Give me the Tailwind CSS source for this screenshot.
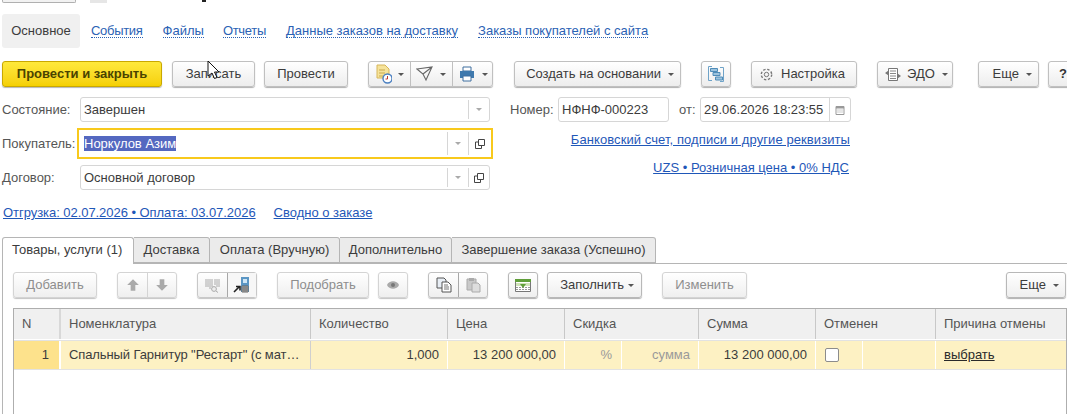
<!DOCTYPE html>
<html lang="ru">
<head>
<meta charset="UTF-8">
<title>Заказ покупателя</title>
<script src="https://cdn.jsdelivr.net/npm/@tailwindcss/browser@4"></script>
</head>
<body class="bg-white">
<div class="relative w-[1067px] h-[414px] overflow-hidden bg-white text-[13px] leading-[16px] text-[#3c3c3c] font-['Liberation_Sans',Arial,sans-serif]">

  <!-- cropped window header -->
  <div class="flex h-[3px] pl-[2px] overflow-hidden">
    <div class="w-[74px] h-[3px] border-b border-x border-[#b0b0b0] rounded-b-[2px] bg-[#f2f2f2]"></div>
    <div class="ml-[14px] w-[17px] h-[3px] bg-[#e6e6e6]"></div>
    <div class="ml-[95px] w-[4px] h-[2px] bg-[#222]"></div>
  </div>

  <!-- section tabs -->
  <div class="flex items-center h-[34px] mt-[11px] pl-[2px]">
    <div class="flex items-center justify-center w-[78px] h-[34px] rounded-[3px] bg-[#f0f0f0]">Основное</div>
    <a class="ml-[11px] text-[#2b62b4] border-b border-dotted border-[#2b62b4] leading-[13px] tracking-[-0.3px]">События</a>
    <a class="ml-[20px] text-[#2b62b4] border-b border-dotted border-[#2b62b4] leading-[13px]">Файлы</a>
    <a class="ml-[19px] text-[#2b62b4] border-b border-dotted border-[#2b62b4] leading-[13px] tracking-[-0.3px]">Отчеты</a>
    <a class="ml-[20px] text-[#2b62b4] border-b border-dotted border-[#2b62b4] leading-[13px]">Данные заказов на доставку</a>
    <a class="ml-[20px] text-[#2b62b4] border-b border-dotted border-[#2b62b4] leading-[13px]">Заказы покупателей с сайта</a>
  </div>

  <!-- command bar -->
  <div class="flex items-start h-[26px] mt-[13px] pl-[2px]">
    <button class="shrink-0 w-[160px] h-[26px] rounded-[3px] border border-[#c9a800] bg-linear-to-b from-[#ffe93a] to-[#f5d000] shadow-[0_1px_1px_#b5b5b5] font-bold text-[#4a4300]">Провести и закрыть</button>
    <button class="shrink-0 ml-[10px] w-[83px] h-[26px] rounded-[3px] border border-[#c0c0c0] bg-linear-to-b from-white to-[#ededed] shadow-[0_1px_1px_#b0b0b0]">Записать</button>
    <button class="shrink-0 ml-[9px] w-[84px] h-[26px] rounded-[3px] border border-[#c0c0c0] bg-linear-to-b from-white to-[#ededed] shadow-[0_1px_1px_#b0b0b0]">Провести</button>

    <div class="shrink-0 ml-[20px] flex w-[125px] h-[26px] rounded-[3px] border border-[#c0c0c0] bg-linear-to-b from-white to-[#ededed] shadow-[0_1px_1px_#b0b0b0]">
      <div class="flex items-center w-[42px] pl-[7px] border-r border-[#c0c0c0]">
        <svg width="16" height="20" viewBox="0 0 16 20"><path d="M1 1h8l4 4v9H1z" fill="#f6e39a" stroke="#d6b65a"/><path d="M3 6h6M3 9h6M3 12h4" stroke="#c9a94e"/><circle cx="11.5" cy="14.5" r="4.5" fill="#fff" stroke="#4a7fc0" stroke-width="1.4"/><path d="M11.5 12v3h-2" stroke="#c0392b" fill="none"/></svg>
        <span class="ml-[6px] w-0 h-0 border-x-[3.5px] border-x-transparent border-t-[3.5px] border-t-[#555]"></span>
      </div>
      <div class="flex items-center w-[42px] pl-[5px] border-r border-[#c0c0c0]">
        <svg width="18" height="16" viewBox="0 0 18 16"><path d="M1 3l15-2-6 13-3-6z M7 8l9-7" fill="none" stroke="#666" stroke-width="1.1"/></svg>
        <span class="ml-[6px] w-0 h-0 border-x-[3.5px] border-x-transparent border-t-[3.5px] border-t-[#555]"></span>
      </div>
      <div class="flex items-center pl-[6px]">
        <svg width="16" height="16" viewBox="0 0 16 16"><path d="M4 1h8v4H4z" fill="#fff" stroke="#3f6f9f"/><path d="M1 5h14v7H1z" fill="#3f79ad"/><path d="M4 10h8v5H4z" fill="#fff" stroke="#3f6f9f"/></svg>
        <span class="ml-[7px] w-0 h-0 border-x-[3.5px] border-x-transparent border-t-[3.5px] border-t-[#555]"></span>
      </div>
    </div>

    <button class="shrink-0 ml-[21px] flex items-center justify-end pr-[6px] w-[167px] h-[26px] rounded-[3px] border border-[#c0c0c0] bg-linear-to-b from-white to-[#ededed] shadow-[0_1px_1px_#b0b0b0]">Создать на основании<span class="ml-[7px] w-0 h-0 border-x-[3.5px] border-x-transparent border-t-[3.5px] border-t-[#555]"></span></button>

    <button class="shrink-0 ml-[20px] flex items-center justify-center w-[30px] h-[26px] rounded-[3px] border border-[#c0c0c0] bg-linear-to-b from-white to-[#ededed] shadow-[0_1px_1px_#b0b0b0]">
      <svg width="16" height="16" viewBox="0 0 16 16"><path d="M4 .5H.5v14H4M12 1.5h3.5V15.5H12" fill="none" stroke="#6fa3c8"/><path d="M2.5 2.5h7v3h-7zM5 6.5h7v3H5zM7.5 11h7v3h-7z" fill="#9cc3de" stroke="#4f8cb8"/></svg>
    </button>

    <button class="shrink-0 ml-[20px] flex items-center w-[106px] h-[26px] pl-[7px] rounded-[3px] border border-[#c0c0c0] bg-linear-to-b from-white to-[#ededed] shadow-[0_1px_1px_#b0b0b0]">
      <svg width="15" height="15" viewBox="0 0 15 15"><circle cx="7.5" cy="7.5" r="2.2" fill="none" stroke="#777"/><circle cx="7.5" cy="7.5" r="5.2" fill="none" stroke="#777" stroke-width="1.4" stroke-dasharray="2.4 1.7"/></svg>
      <span class="ml-[7px]">Настройка</span>
    </button>

    <button class="shrink-0 ml-[20px] flex items-center w-[76px] h-[26px] pl-[7px] rounded-[3px] border border-[#c0c0c0] bg-linear-to-b from-white to-[#ededed] shadow-[0_1px_1px_#b0b0b0]">
      <svg width="16" height="15" viewBox="0 0 16 15"><path d="M3.5 1.5h9v12h-9z" fill="#fff" stroke="#777"/><path d="M5 4h6M5 6.5h6M5 9h6M5 11.5h6" stroke="#888"/><path d="M0 6l3.5-2.5v5zM16 9l-3.5-2.5v5z" fill="#777"/></svg>
      <span class="ml-[6px]">ЭДО</span>
      <span class="ml-[7px] w-0 h-0 border-x-[3.5px] border-x-transparent border-t-[3.5px] border-t-[#555]"></span>
    </button>

    <button class="shrink-0 ml-[25px] flex items-center justify-end pr-[6px] w-[61px] h-[26px] rounded-[3px] border border-[#c0c0c0] bg-linear-to-b from-white to-[#ededed] shadow-[0_1px_1px_#b0b0b0]">Еще<span class="ml-[7px] w-0 h-0 border-x-[3.5px] border-x-transparent border-t-[3.5px] border-t-[#555]"></span></button>
    <button class="ml-[9px] shrink-0 w-[30px] h-[26px] pl-[10px] text-left rounded-[3px] border border-[#c0c0c0] bg-linear-to-b from-white to-[#ededed] shadow-[0_1px_1px_#b0b0b0] font-bold text-[#333]">?</button>
  </div>

  <!-- header form -->
  <div class="flex mt-[10px]">
    <div class="w-[493px] shrink-0">
      <div class="flex items-center h-[25px] pl-[2px]">
        <span class="w-[78px] text-[#555]">Состояние:</span>
        <div class="flex items-center w-[410px] h-[25px] rounded-[3px] border border-[#d6d6d6] pl-[3px]">
          <span class="flex-1">Завершен</span>
          <span class="flex items-center justify-center w-[21px] h-[19px] border-l border-[#d6d6d6]"><span class="w-0 h-0 border-x-[3.5px] border-x-transparent border-t-[3.5px] border-t-[#aaa]"></span></span>
        </div>
      </div>
      <div class="flex items-center h-[31px] mt-[6px] pl-[2px]">
        <span class="w-[75px] text-[#555]">Покупатель:</span>
        <div class="flex items-center w-[416px] h-[31px] border-[2px] border-[#f8c91c] pl-[5px]">
          <span class="flex-1"><span class="bg-[#5468c0] text-white">Норкулов Азим</span></span>
          <span class="flex items-center justify-center w-[21px] h-[23px] border-l border-[#d6d6d6]"><span class="w-0 h-0 border-x-[3.5px] border-x-transparent border-t-[3.5px] border-t-[#aaa]"></span></span>
          <span class="flex items-center justify-center w-[23px] h-[23px] border-l border-[#d6d6d6]">
            <svg width="10" height="10" viewBox="0 0 10 10"><path d="M3.5.5h6v6h-6zM3.5 3H.5v6.5h6V6.5" fill="none" stroke="#444"/></svg>
          </span>
        </div>
      </div>
      <div class="flex items-center h-[25px] mt-[6px] pl-[2px]">
        <span class="w-[78px] text-[#555]">Договор:</span>
        <div class="flex items-center w-[410px] h-[25px] rounded-[3px] border border-[#d6d6d6] pl-[3px]">
          <span class="flex-1">Основной договор</span>
          <span class="flex items-center justify-center w-[21px] h-[19px] border-l border-[#d6d6d6]"><span class="w-0 h-0 border-x-[3.5px] border-x-transparent border-t-[3.5px] border-t-[#aaa]"></span></span>
          <span class="flex items-center justify-center w-[21px] h-[19px] border-l border-[#d6d6d6]">
            <svg width="10" height="10" viewBox="0 0 10 10"><path d="M3.5.5h6v6h-6zM3.5 3H.5v6.5h6V6.5" fill="none" stroke="#444"/></svg>
          </span>
        </div>
      </div>
    </div>

    <div class="w-[358px] shrink-0">
      <div class="flex items-center h-[25px] pl-[17px]">
        <span class="w-[48px] text-[#555]">Номер:</span>
        <div class="flex items-center w-[111px] h-[25px] rounded-[3px] border border-[#d6d6d6] pl-[3px]">НФНФ-000223</div>
        <span class="ml-[10px] w-[21px] text-[#555]">от:</span>
        <div class="flex items-center w-[151px] h-[25px] rounded-[3px] border border-[#d6d6d6] pl-[3px]">
          <span class="flex-1">29.06.2026 18:23:55</span>
          <span class="flex items-center justify-center w-[21px] h-[23px] border-l border-[#d6d6d6]">
            <svg width="10" height="10" viewBox="0 0 10 10"><path d="M1 1.5h8v8H1z" fill="#fff" stroke="#999"/><path d="M1 1h8v2.5H1z" fill="#999"/><path d="M2.5 5h1M4.5 5h1M6.5 5h1M2.5 7h1M4.5 7h1M6.5 7h1" stroke="#999"/></svg>
          </span>
        </div>
      </div>
      <div class="flex justify-end mt-[10px] pr-[1px]"><a class="text-[#1f57b8] underline tracking-[0.08px]">Банковский счет, подписи и другие реквизиты</a></div>
      <div class="flex justify-end mt-[12px] pr-[2px]"><a class="text-[#1f57b8] underline">UZS • Розничная цена • 0% НДС</a></div>
    </div>
  </div>

  <div class="flex mt-[15px] pl-[3px] h-[16px]">
    <a class="text-[#1f57b8] underline tracking-[-0.05px]">Отгрузка: 02.07.2026 • Оплата: 03.07.2026</a>
    <a class="ml-[18px] text-[#1f57b8] underline">Сводно о заказе</a>
  </div>

  <!-- document tabs -->
  <div class="flex h-[27px] mt-[16px] pl-[2px] relative z-10">
    <div class="w-[132px] h-[27px] pl-[9px] pt-[4px] rounded-t-[3px] border border-b-0 border-[#b5b5b5] bg-white">Товары, услуги (1)</div>
    <div class="flex items-center justify-center w-[76px] h-[26px] border border-l-0 border-[#b5b5b5] bg-[#ebebeb] rounded-tr-[3px]">Доставка</div>
    <div class="flex items-center justify-center w-[130px] h-[26px] border border-l-0 border-[#b5b5b5] bg-[#ebebeb] rounded-tr-[3px]">Оплата (Вручную)</div>
    <div class="flex items-center justify-center w-[112px] h-[26px] border border-l-0 border-[#b5b5b5] bg-[#ebebeb] rounded-tr-[3px]">Дополнительно</div>
    <div class="flex items-center justify-center w-[204px] h-[26px] border border-l-0 border-[#b5b5b5] bg-[#ebebeb] rounded-tr-[3px]">Завершение заказа (Успешно)</div>
  </div>

  <!-- tab page -->
  <div class="ml-[2px] -mt-px border-t border-l border-[#b5b5b5] pl-[10px] pt-[8px] h-[152px]">
    <div class="flex items-start h-[26px]">
      <button class="shrink-0 w-[84px] h-[26px] rounded-[3px] border border-[#d4d4d4] bg-linear-to-b from-white to-[#efefef] shadow-[0_1px_1px_#c4c4c4] text-[#8e8e8e]">Добавить</button>

      <div class="shrink-0 ml-[20px] flex w-[60px] h-[26px] rounded-[3px] border border-[#d4d4d4] bg-linear-to-b from-white to-[#efefef] shadow-[0_1px_1px_#c4c4c4]">
        <div class="flex items-center justify-center w-[30px] border-r border-[#d4d4d4]"><svg width="14" height="14" viewBox="0 0 12 12"><path d="M6 1l5 5H8v5H4V6H1z" fill="#aaa"/></svg></div>
        <div class="flex items-center justify-center w-[28px]"><svg width="14" height="14" viewBox="0 0 12 12"><path d="M6 11l5-5H8V1H4v5H1z" fill="#aaa"/></svg></div>
      </div>

      <div class="shrink-0 ml-[20px] flex w-[60px] h-[26px] rounded-[3px] border border-[#c8c8c8] bg-linear-to-b from-white to-[#efefef] shadow-[0_1px_1px_#c4c4c4]">
        <div class="flex items-center justify-center w-[30px] border-r border-[#a8a8a8]">
          <svg width="16" height="15" viewBox="0 0 16 15"><path d="M1 1v8M3 1v8M5 1v10M7 1v8M10 1v6M12 1v8M14 1v8" stroke="#aaa"/><circle cx="9" cy="11" r="2.4" fill="#eee" stroke="#aaa"/><path d="M11 13l2 1.5" stroke="#aaa"/></svg>
        </div>
        <div class="flex items-center justify-center w-[28px] bg-[#f7f7f7]">
          <svg width="18" height="18" viewBox="0 0 18 18"><path d="M8 1h8v15H8z" fill="#5b96c4"/><path d="M10 3h4v4h-4z" fill="#cfe6f5"/><path d="M9 10h6v6H9z" fill="#eee" stroke="#666"/><path d="M11 10v6M13 10v6M9 12h6M9 14h6" stroke="#666"/><path d="M1 16l5-5M3 10.5h4v4" fill="none" stroke="#222" stroke-width="1.6"/></svg>
        </div>
      </div>

      <button class="shrink-0 ml-[20px] w-[92px] h-[26px] rounded-[3px] border border-[#d4d4d4] bg-linear-to-b from-white to-[#efefef] shadow-[0_1px_1px_#c4c4c4] text-[#8e8e8e]">Подобрать</button>

      <button class="shrink-0 ml-[9px] flex items-center justify-center w-[30px] h-[26px] rounded-[3px] border border-[#d4d4d4] bg-linear-to-b from-white to-[#efefef] shadow-[0_1px_1px_#c4c4c4]">
        <svg width="14" height="10" viewBox="0 0 14 10"><path d="M1 5c2-5 10-5 12 0-2 5-10 5-12 0z" fill="#aaa"/><circle cx="7" cy="5" r="2" fill="#777"/></svg>
      </button>

      <div class="shrink-0 ml-[20px] flex w-[60px] h-[26px] rounded-[3px] border border-[#c0c0c0] bg-linear-to-b from-white to-[#efefef] shadow-[0_1px_1px_#c4c4c4]">
        <div class="flex items-center justify-center w-[30px] border-r border-[#a8a8a8]">
          <svg width="16" height="16" viewBox="0 0 16 16"><path d="M1 1h7l2 2v8H1z" fill="#e8eef5" stroke="#555"/><path d="M6 5h6l3 3v7H6z" fill="#fff" stroke="#555"/><path d="M8 8h4M8 10h5M8 12h5" stroke="#777"/></svg>
        </div>
        <div class="flex items-center justify-center w-[28px]">
          <svg width="15" height="16" viewBox="0 0 15 16"><path d="M1 2h9v11H1z" fill="#c9c9c9" stroke="#aaa"/><path d="M3 1h5v3H3z" fill="#aaa"/><path d="M6 6h6l2 2v7H6z" fill="#ddd" stroke="#aaa"/></svg>
        </div>
      </div>

      <button class="shrink-0 ml-[20px] flex items-center justify-center w-[30px] h-[26px] rounded-[3px] border border-[#b8b8b8] bg-linear-to-b from-white to-[#efefef] shadow-[0_1px_1px_#b0b0b0]">
        <svg width="16" height="13" viewBox="0 0 16 13"><path d="M.5.5h15v12H.5z" fill="#fff" stroke="#777"/><path d="M0 0h16v3H0z" fill="#5f9e3a"/><path d="M1 4h14v3H1z" fill="#cfe3b8"/><path d="M1 8.5h14M1 10.5h14" stroke="#999" stroke-dasharray="2 1"/><path d="M8 9L5 5h6z" fill="#5f9e3a"/></svg>
      </button>

      <button class="shrink-0 ml-[9px] flex items-center justify-end pr-[7px] w-[95px] h-[26px] rounded-[3px] border border-[#b8b8b8] bg-linear-to-b from-white to-[#efefef] shadow-[0_1px_1px_#b0b0b0]">Заполнить<span class="ml-[4px] w-0 h-0 border-x-[3.5px] border-x-transparent border-t-[3.5px] border-t-[#555]"></span></button>

      <button class="shrink-0 ml-[20px] w-[85px] h-[26px] rounded-[3px] border border-[#d4d4d4] bg-linear-to-b from-white to-[#efefef] shadow-[0_1px_1px_#c4c4c4] text-[#8e8e8e]">Изменить</button>

      <button class="shrink-0 ml-[259px] flex items-center justify-end pr-[6px] w-[60px] h-[26px] rounded-[3px] border border-[#b8b8b8] bg-linear-to-b from-white to-[#efefef] shadow-[0_1px_1px_#b0b0b0]">Еще<span class="ml-[7px] w-0 h-0 border-x-[3.5px] border-x-transparent border-t-[3.5px] border-t-[#555]"></span></button>
    </div>

    <!-- table -->
    <div class="mt-[10px] w-[1054px] h-[110px] border border-b-0 border-[#aeaeae]">
      <div class="grid grid-cols-[47px_250px_137px_117px_134px_117px_120px_130px] h-[30px] bg-[#f0f0f0]">
        <div class="flex items-center pl-[8px] border-r-2 border-[#d8d8d8] text-[#555]">N</div>
        <div class="flex items-center pl-[8px] border-r border-[#c8c8c8] text-[#555]">Номенклатура</div>
        <div class="flex items-center pl-[8px] border-r border-[#c8c8c8] text-[#555]">Количество</div>
        <div class="flex items-center pl-[8px] border-r border-[#c8c8c8] text-[#555]">Цена</div>
        <div class="flex items-center pl-[8px] border-r border-[#c8c8c8] text-[#555]">Скидка</div>
        <div class="flex items-center pl-[8px] border-r border-[#c8c8c8] text-[#555]">Сумма</div>
        <div class="flex items-center pl-[8px] border-r border-[#c8c8c8] text-[#555]">Отменен</div>
        <div class="flex items-center pl-[8px] text-[#555]">Причина отмены</div>
      </div>
      <div class="grid grid-cols-[47px_250px_137px_117px_57px_77px_117px_47px_73px_130px] h-[30px] mt-px border-y border-[#e2e2e2] bg-[#fdf1c3]">
        <div class="flex items-center justify-end pr-[10px] bg-[#fde28c] border-r-2 border-white">1</div>
        <div class="flex items-center pl-[8px] border-r border-[#cfcfcf] whitespace-nowrap tracking-[-0.1px]">Спальный Гарнитур "Рестарт" (с мат…</div>
        <div class="flex items-center justify-end pr-[8px] border-r border-white">1,000</div>
        <div class="flex items-center justify-end pr-[8px] border-r border-white">13 200 000,00</div>
        <div class="flex items-center justify-end pr-[9px] border-r border-white text-[#9a9a9a]">%</div>
        <div class="flex items-center justify-end pr-[8px] border-r border-white text-[#9a9a9a]">сумма</div>
        <div class="flex items-center justify-end pr-[8px] border-r border-white">13 200 000,00</div>
        <div class="flex items-center pl-[9px] border-r border-white"><span class="w-[14px] h-[14px] rounded-[2px] border border-[#8c8c8c] bg-white"></span></div>
        <div class="border-r border-white"></div>
        <div class="flex items-center pl-[8px]"><a class="underline text-[#2a2a2a]">выбрать</a></div>
      </div>
    </div>
  </div>

  <!-- mouse cursor -->
  <svg class="absolute left-[207px] top-[60px]" width="14" height="20" viewBox="0 0 14 20"><path d="M1 1v15l4-3 2.5 5.5 2.5-1L7.5 12H12z" fill="#fff" stroke="#111"/></svg>
</div>
</body>
</html>
